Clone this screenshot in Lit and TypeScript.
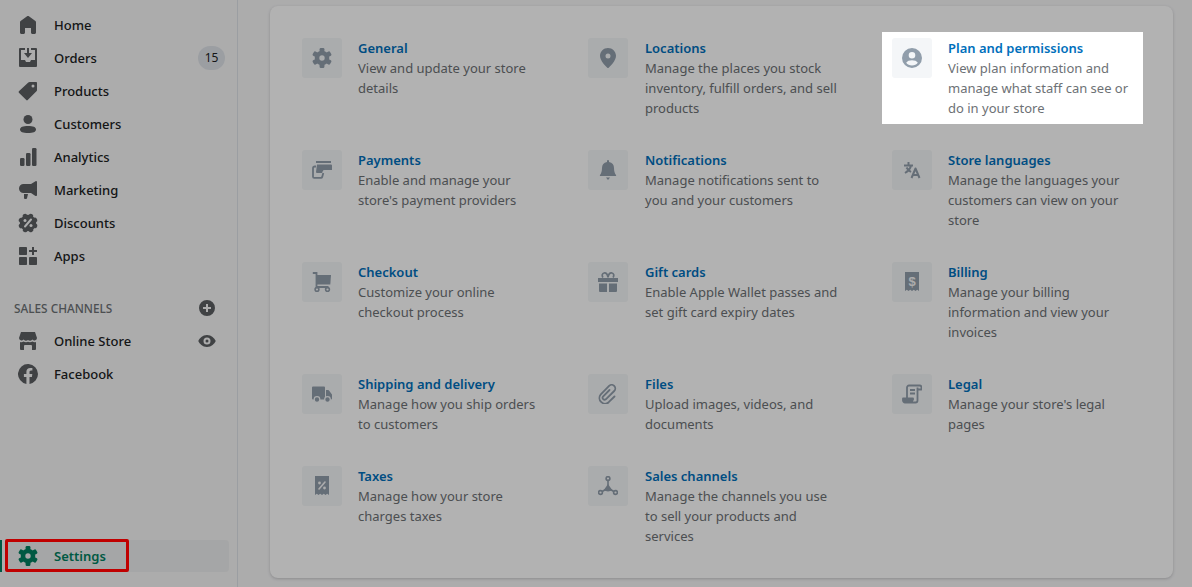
import { LitElement, html, css, svg } from "lit";
import { customElement } from "lit/decorators.js";

const teeth = [0, 60, 120, 180, 240, 300].map(
  (a) => svg`<rect x="7.6" y="0" width="4.8" height="4" rx="1.2" transform="rotate(${a} 10 10)" fill="currentColor"/>`
);
const gear = svg`<circle cx="10" cy="10" r="5" fill="none" stroke="currentColor" stroke-width="4.6"/>${teeth}`;
const scallops = [0, 45, 90, 135, 180, 225, 270, 315].map(
  (a) => svg`<circle cx="10" cy="2.6" r="2.4" transform="rotate(${a + 22} 10 10)" fill="currentColor"/>`
);

const I: Record<string, unknown> = {
  home: svg`<path fill="currentColor" d="M18 7.3V17.5c0 .8-.7 1.5-1.5 1.5h-2c-.8 0-1.5-.7-1.5-1.5V13H7v4.5C7 18.3 6.3 19 5.5 19h-2C2.700 19 2 18.300 2 17.500V7.300c0-.5.2-.9.6-1.200l6.500-4.800c.5-.4 1.300-.4 1.800 0l6.500 4.800c.4.300.6.700.6 1.200z"/>`,
  orders: svg`<path fill="currentColor" fill-rule="evenodd" d="M2 0h5v2H3v10h4l1 2h4l1-2h4V2h-4V0h5a1 1 0 011 1v17a1 1 0 01-1 1H2a1 1 0 01-1-1V1a1 1 0 011-1z"/><path fill="currentColor" d="M9 0h2v5h3l-4 5-4-5h3z"/>`,
  products: svg`<path fill="currentColor" fill-rule="evenodd" d="M18.500 1h-6.800a2 2 0 00-1.400.6L.9 10.300a1 1 0 000 1.400l7.400 7.400a1 1 0 001.400 0l9-9.100a2 2 0 00.3-1.100V2a1 1 0 00-.5-1zM15 6.500a1.500 1.500 0 110-3 1.500 1.500 0 010 3z"/>`,
  customers: svg`<circle cx="10" cy="5.500" r="4.500" fill="currentColor"/><path fill="currentColor" d="M2 15.500C2 13 5 12 10 12s8 1 8 3.500S15 19 10 19s-8-1-8-3.500z"/>`,
  analytics: svg`<g fill="currentColor"><rect x="2" y="11" width="4.500" height="8" rx="1.200"/><rect x="8" y="6" width="4.500" height="13" rx="1.200"/><rect x="14" y="1" width="4.500" height="18" rx="1.200"/></g>`,
  marketing: svg`<path fill="currentColor" d="M18 1a1 1 0 011 1v13a1 1 0 01-1.500.9L13 13H5.500a4.500 4.500 0 010-9H13l4.500-2.800A1 1 0 0118 1z"/><path fill="currentColor" d="M6 14h4l-1 4.200a1 1 0 01-1 .8H7a1 1 0 01-1-1z"/>`,
  discounts: svg`<circle cx="10" cy="10" r="8.200" fill="currentColor"/>${scallops}<path d="M13 6.500L7 13.500" stroke="#f6f6f7" stroke-width="2" stroke-linecap="round"/><circle cx="7" cy="7.500" r="1.500" fill="#f6f6f7"/><circle cx="13" cy="12.500" r="1.500" fill="#f6f6f7"/>`,
  apps: svg`<g fill="currentColor"><rect x="1" y="1" width="8" height="8" rx=".8"/><rect x="1" y="11" width="8" height="8" rx=".8"/><rect x="11" y="11" width="8" height="8" rx=".8"/><path d="M14 1h2v3h3v2h-3v3h-2V6h-3V4h3z"/></g>`,
  plus: svg`<path fill="currentColor" fill-rule="evenodd" d="M10 2a8 8 0 100 16 8 8 0 000-16zM9 6h2v3h3v2h-3v3H9v-3H6V9h3z"/>`,
  eye: svg`<path fill="currentColor" fill-rule="evenodd" d="M10 4c4.500 0 7.500 3.500 8.500 5.500a1 1 0 010 1C17.500 12.500 14.500 16 10 16s-7.500-3.500-8.500-5.500a1 1 0 010-1C2.500 7.500 5.500 4 10 4zm0 2.500a3.500 3.500 0 100 7 3.500 3.500 0 000-7zm0 2a1.500 1.500 0 110 3 1.500 1.500 0 010-3z"/>`,
  store: svg`<path fill="currentColor" d="M3 1h14l2 6a2.600 2.600 0 01-4.500 1.600A3 3 0 0110 9a3 3 0 01-4.500-.4A2.600 2.600 0 011 7z"/><path fill="currentColor" d="M2 11c1.300.4 2.500.2 3.500-.4 1.400.8 3.200.9 4.500.2 1.300.7 3.100.6 4.500-.2 1 .6 2.200.8 3.500.4v7a1 1 0 01-1 1h-3v-4a1 1 0 00-1-1H7a1 1 0 00-1 1v4H3a1 1 0 01-1-1z"/>`,
  facebook: svg`<path fill="currentColor" d="M20 10a10 10 0 10-11.600 9.900v-7H5.900V10h2.500V7.800c0-2.500 1.500-3.900 3.800-3.900 1.100 0 2.200.2 2.200.2v2.500h-1.300c-1.200 0-1.600.8-1.600 1.600V10h2.800l-.4 2.900h-2.400v7A10 10 0 0020 10z"/>`,
  gear,
  location: svg`<path fill="currentColor" fill-rule="evenodd" d="M10 0C5.600 0 2 3.500 2 7.800c0 5 6 10.700 7.300 11.900a1 1 0 001.400 0C12 18.500 18 12.800 18 7.800 18 3.500 14.400 0 10 0zm0 10.500a2.500 2.500 0 110-5 2.500 2.500 0 010 5z"/>`,
  plan: svg`<path fill="currentColor" fill-rule="evenodd" d="M10 0a10 10 0 100 20 10 10 0 000-20zM10 4a3.300 3.300 0 110 6.600A3.300 3.300 0 0110 4zM10 17.500c-2.400 0-4.500-1.100-5.800-2.800C5.200 13 7.400 12.200 10 12.200s4.800.8 5.800 2.500c-1.300 1.700-3.400 2.800-5.800 2.800z"/>`,
  payments: svg`<path fill="currentColor" d="M4 1h15v2H4z"/><path fill="currentColor" d="M5 4.500h14a1 1 0 011 1V10h-7.500a2 2 0 00-1.900 1.400L10 13H5a1 1 0 01-1-1z"/><path fill="none" stroke="currentColor" stroke-width="1.800" stroke-linejoin="round" d="M4 6.500H2.700A1.700 1.700 0 001 8.200v8.500c0 .6.500 1.100 1.100 1.100H9c.6 0 1-.3 1.200-.9L11.300 13"/>`,
  bell: svg`<path fill="currentColor" d="M10 0a1 1 0 011 1v1.100A6 6 0 0116 8c0 3 .7 5.500 2 7a.6.6 0 01-.5 1h-15a.6.6 0 01-.5-1c1.300-1.500 2-4 2-7a6 6 0 015-5.900V1a1 1 0 011-1z"/><path fill="currentColor" d="M8 17.500h4L10 20z"/>`,
  languages: svg`<g fill="none" stroke="currentColor" stroke-width="2"><path d="M2 5.500h9M6.500 2v3.500M9 5.500c-.6 3-2.600 5.500-6 7.500M4.500 7.500c1 1.800 2.500 3.300 4.500 4.500"/><path stroke-linejoin="round" d="M9.500 18L13.500 8.500 17.500 18M11 15h5"/></g>`,
  cart: svg`<path fill="currentColor" d="M5 3h14l-.7 9.500H5z"/><path fill="none" stroke="currentColor" stroke-width="1.800" d="M.8 1H4.500V15h12"/><circle cx="5" cy="17.500" r="1.900" fill="none" stroke="currentColor" stroke-width="1.600"/><circle cx="15.500" cy="17.500" r="1.900" fill="none" stroke="currentColor" stroke-width="1.600"/>`,
  gift: svg`<path fill="currentColor" d="M0 6h20v4H0zM1 11.500h8V20H2a1 1 0 01-1-1zM11 11.500h8V19a1 1 0 01-1 1h-7z"/><path fill="none" stroke="currentColor" stroke-width="1.700" d="M10 5.500C9.500 2 7.500.8 6 1S3.500 3.500 5 5.500M10 5.500c.5-3.500 2.500-4.700 4-4.500s2.500 2.500 1 4.500"/>`,
  billing: svg`<path fill="currentColor" d="M3 0h14v19l-1.750-1.300-1.750 1.300-1.750-1.300-1.750 1.300-1.750-1.300-1.750 1.300-1.750-1.300L3 19z"/><text x="10" y="14" text-anchor="middle" font-size="13" font-weight="700" font-family="Liberation Sans, sans-serif" fill="#f6f6f7">$</text>`,
  truck: svg`<path fill="currentColor" d="M1 2.500h11a1 1 0 011 1V15.500H1a1 1 0 01-1-1v-11a1 1 0 011-1zM14 6h2.200a1 1 0 01.8.4l2.800 3.800c.1.200.2.400.2.600V14.500a1 1 0 01-1 1h-5z"/><circle cx="5" cy="15.500" r="2.800" fill="currentColor" stroke="#f4f6f8" stroke-width="1.200"/><circle cx="15.500" cy="15.500" r="2.800" fill="currentColor" stroke="#f4f6f8" stroke-width="1.200"/>`,
  clip: svg`<path fill="none" stroke="currentColor" stroke-width="1.800" stroke-linecap="round" d="M11.500 6L5 12.500a2 2 0 002.800 2.800L16.200 7a3.600 3.600 0 00-5.100-5.100L2.800 10.300a5.600 5.600 0 007.900 7.900L16.500 12.500"/>`,
  legal: svg`<path fill="none" stroke="currentColor" stroke-width="1.800" stroke-linejoin="round" d="M5 14V3.500A2 2 0 017 1.500h10.500a2 2 0 012 2v2h-4M15.500 3.500v13a2 2 0 01-2 2H3a2 2 0 01-2-2V14.500h10v2"/><path fill="none" stroke="currentColor" stroke-width="1.800" d="M8 6h5M8 9.500h5"/><path fill="currentColor" d="M1 15h10v3H2z"/>`,
  taxes: svg`<path fill="currentColor" d="M3 0h14v19l-1.750-1.300-1.750 1.300-1.750-1.300-1.750 1.300-1.750-1.300-1.750 1.300-1.750-1.300L3 19z"/><path stroke="#f6f6f7" stroke-width="1.600" stroke-linecap="round" d="M13 6L7 13"/><circle cx="7.500" cy="7" r="1.400" fill="#f6f6f7"/><circle cx="12.500" cy="12" r="1.400" fill="#f6f6f7"/>`,
  channels: svg`<g fill="none" stroke="currentColor" stroke-width="1.600"><circle cx="10" cy="2.500" r="1.900"/><circle cx="2.500" cy="16.500" r="1.900"/><circle cx="17.500" cy="16.500" r="1.900"/><path d="M10 4.500v6M4.200 15.500l5-3M15.800 15.500l-5-3"/></g><path fill="currentColor" d="M10 8l4.500 6.500-4.500 1-4.500-1z"/>`,
};

const ic = (n: string) => html`<svg viewBox="0 0 20 20" width="20" height="20" aria-hidden="true">${I[n]}</svg>`;

const nav = [
  ["home", "Home"], ["orders", "Orders", "15"], ["products", "Products"], ["customers", "Customers"],
  ["analytics", "Analytics"], ["marketing", "Marketing"], ["discounts", "Discounts"], ["apps", "Apps"],
];

const settings: { i: string; t: string; d: string[]; hi?: boolean }[] = [
  { i: "gear", t: "General", d: ["View and update your store", "details"] },
  { i: "location", t: "Locations", d: ["Manage the places you stock", "inventory, fulfill orders, and sell", "products"] },
  { i: "plan", t: "Plan and permissions", d: ["View plan information and", "manage what staff can see or", "do in your store"], hi: true },
  { i: "payments", t: "Payments", d: ["Enable and manage your", "store's payment providers"] },
  { i: "bell", t: "Notifications", d: ["Manage notifications sent to", "you and your customers"] },
  { i: "languages", t: "Store languages", d: ["Manage the languages your", "customers can view on your", "store"] },
  { i: "cart", t: "Checkout", d: ["Customize your online", "checkout process"] },
  { i: "gift", t: "Gift cards", d: ["Enable Apple Wallet passes and", "set gift card expiry dates"] },
  { i: "billing", t: "Billing", d: ["Manage your billing", "information and view your", "invoices"] },
  { i: "truck", t: "Shipping and delivery", d: ["Manage how you ship orders", "to customers"] },
  { i: "clip", t: "Files", d: ["Upload images, videos, and", "documents"] },
  { i: "legal", t: "Legal", d: ["Manage your store's legal", "pages"] },
  { i: "taxes", t: "Taxes", d: ["Manage how your store", "charges taxes"] },
  { i: "channels", t: "Sales channels", d: ["Manage the channels you use", "to sell your products and", "services"] },
];

@customElement("app-root")
export class AppRoot extends LitElement {
  static styles = css`
    :host { display: block; font-family: "Noto Sans", sans-serif; font-size: 13px; line-height: 20px; color: #202223; }
    * { box-sizing: border-box; }
    .app { display: flex; height: 587px; overflow: hidden; position: relative; background: #f6f6f7; }
    .overlay { position: absolute; inset: 0; background: rgba(0, 0, 0, 0.3); z-index: 1; }
    .side { width: 238px; flex: none; border-right: 1px solid #dfe3e8; display: flex; flex-direction: column; padding: 8px 8px 15px 0; }
    .nav { display: flex; align-items: center; height: 33px; padding-left: 18px; font-weight: 500; }
    .nav svg { color: #5c5f62; flex: none; display: block; }
    .nav span { margin-left: 16px; flex: 1; }
    .badge { flex: none; margin-left: auto; width: 27px; height: 24px; border-radius: 12px; background: #dfe3e8; font-size: 12px; font-weight: 400; display: flex; align-items: center; justify-content: center; margin-right: 4px; }
    .section { display: flex; align-items: center; justify-content: space-between; height: 20px; margin: 26px 0 6px; padding: 0 12px 0 14px; font-size: 11.8px; color: #6d7175; font-weight: 500; }
    .section svg { color: #5c5f62; display: block; }
    .eye { color: #5c5f62; margin-right: 12px; }
    .spacer { flex: 1; }
    .active { position: relative; height: 32px; margin-left: 6px; padding-left: 12px; border-radius: 4px; background: #edeeef; font-weight: 600; color: #008060; }
    .active svg { color: #008060; }
    .active::before { content: ""; position: absolute; left: -6px; top: 0; bottom: 0; width: 2px; background: #008060; }
    .annot { position: absolute; left: -1px; top: -1px; width: 124px; height: 33px; border: 3px solid #c00000; border-radius: 2px; z-index: 2; }
    .main { flex: 1; min-width: 0; padding: 6px 19px 9px 32px; }
    .card { height: 572px; background: #fff; border-radius: 8px; box-shadow: 0 1px 3px rgba(63, 63, 68, 0.25); padding: 32px; display: grid; grid-template-columns: 286px 304px 1fr; row-gap: 32px; align-content: start; }
    .item { display: flex; gap: 16px; align-items: flex-start; }
    .item:nth-child(3n + 2) { gap: 17px; }
    .hi { position: relative; z-index: 2; background: #fff; margin: -6px 0 -6px -10px; padding: 6px 15px 6px 10px; justify-self: start; }
    .box { flex: none; width: 40px; height: 40px; border-radius: 3px; background: #f4f6f8; color: #919eab; display: flex; align-items: center; justify-content: center; }
    .box svg { display: block; }
    .title { color: #006fbb; font-weight: 600; }
    .desc { color: #6d7175; white-space: nowrap; }
  `;

  render() {
    return html`<div class="app">
      <aside class="side">
        ${nav.map(([i, t, b]) => html`<div class="nav">${ic(i)}<span>${t}</span>${b ? html`<div class="badge">${b}</div>` : ""}</div>`)}
        <div class="section"><div>SALES CHANNELS</div>${ic("plus")}</div>
        <div class="nav">${ic("store")}<span>Online Store</span><div class="eye">${ic("eye")}</div></div>
        <div class="nav">${ic("facebook")}<span>Facebook</span></div>
        <div class="spacer"></div>
        <div class="nav active">${ic("gear")}<span>Settings</span><div class="annot"></div></div>
      </aside>
      <main class="main">
        <div class="card">
          ${settings.map((s) => html`<div class="item ${s.hi ? "hi" : ""}">
            <div class="box">${ic(s.i)}</div>
            <div>
              <div class="title">${s.t}</div>
              <div class="desc">${s.d.map((l, n) => html`${n ? html`<br />` : ""}${l}`)}</div>
            </div>
          </div>`)}
        </div>
      </main>
      <div class="overlay"></div>
    </div>`;
  }
}
